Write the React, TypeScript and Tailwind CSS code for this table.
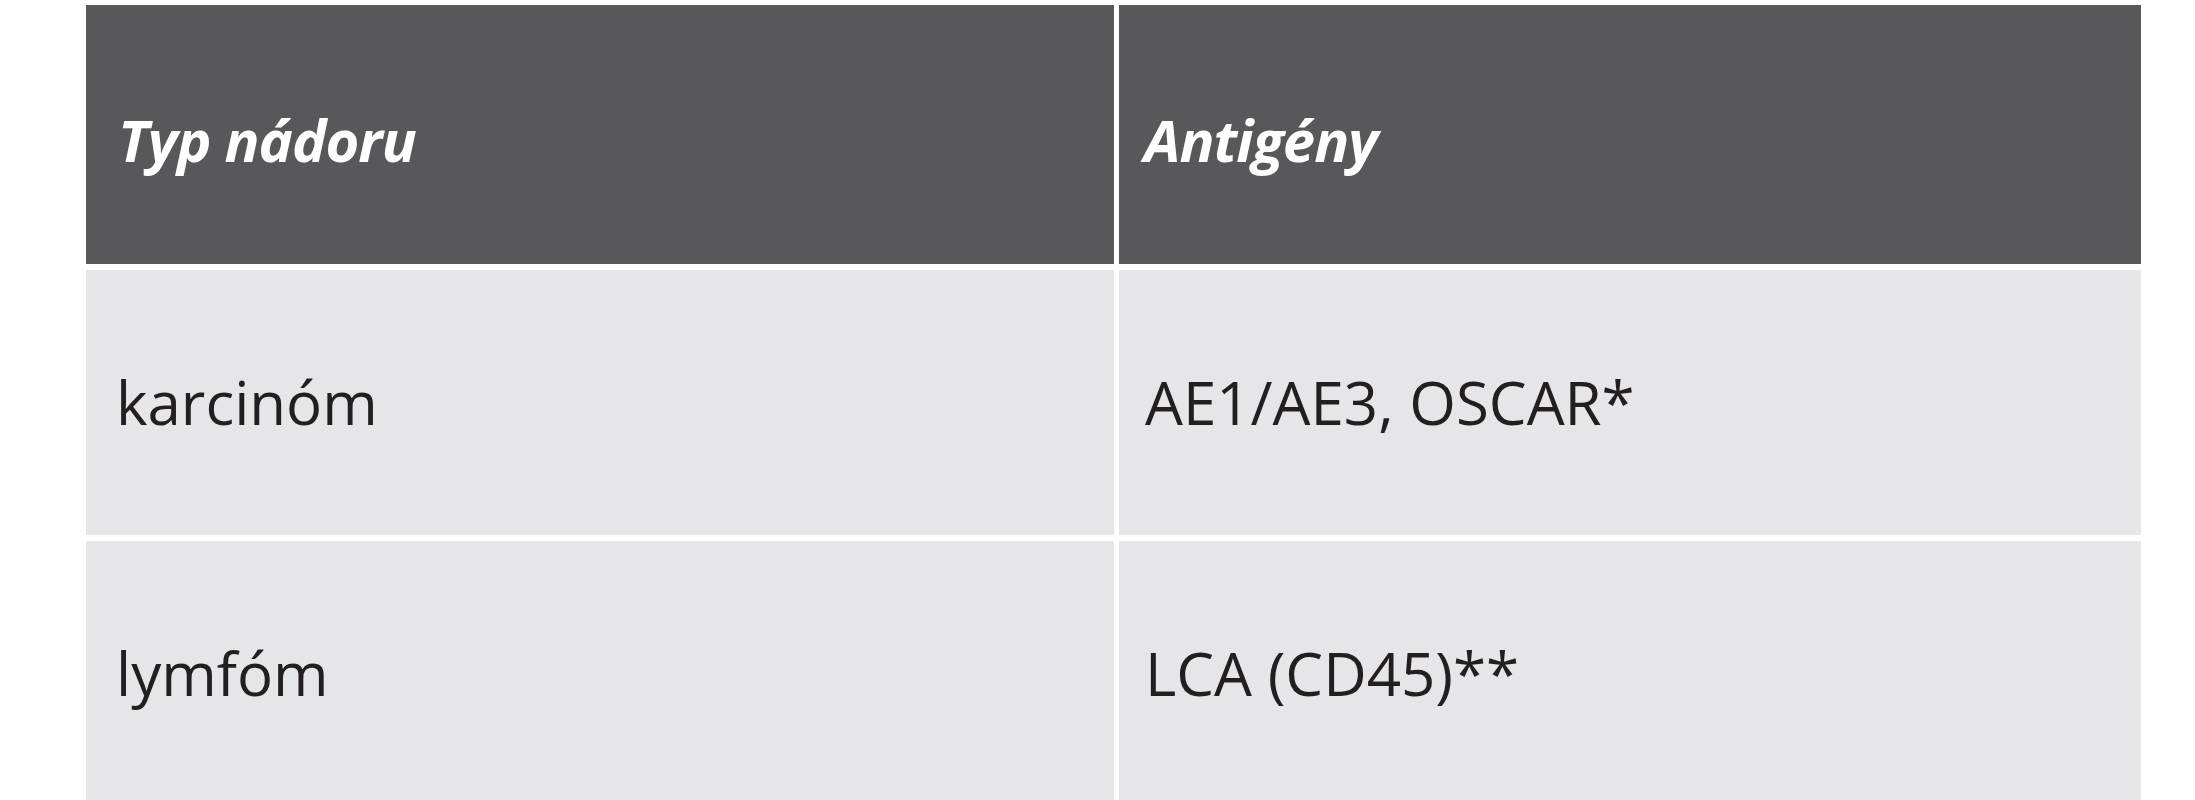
import React from "react";

const rows = [
  ["karcinóm", "AE1/AE3, OSCAR*"],
  ["lymfóm", "LCA (CD45)**"],
];

export default function App() {
  return (
    <div className="min-h-screen w-full bg-white pt-[5px] pl-[86px]" style={{ fontFamily: '"Open Sans", "Liberation Sans", sans-serif' }}>
      <div className="grid grid-cols-[1028px_1022px] gap-x-[5px] gap-y-[6px]">
        <div className="h-[259px] bg-[#58585a] pl-[32px] pt-[106px] text-[58px] leading-none font-bold italic text-white tracking-[-1px]">
          Typ nádoru
        </div>
        <div className="h-[259px] bg-[#58585a] pl-[25px] pt-[106px] text-[58px] leading-none font-bold italic text-white tracking-[-1px]">
          Antigény
        </div>
        {rows.map((r, i) => (
          <React.Fragment key={i}>
            <div className="h-[265px] bg-[#e6e6e8] pl-[30px] pt-[102px] text-[60px] leading-none text-[#231f20]">
              {r[0]}
            </div>
            <div className="h-[265px] bg-[#e6e6e8] pl-[26px] pt-[102px] text-[60px] leading-none text-[#231f20]">
              {r[1]}
            </div>
          </React.Fragment>
        ))}
      </div>
    </div>
  );
}
